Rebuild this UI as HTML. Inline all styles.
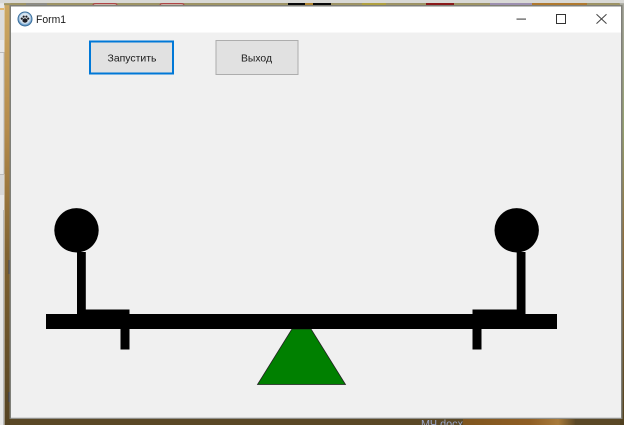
<!DOCTYPE html>
<html lang="ru">
<head>
<meta charset="utf-8">
<title>Form1</title>
<style>
html,body{margin:0;padding:0;background:#6b5430}
body{width:624px;height:425px;overflow:hidden;position:relative;font-family:"Liberation Sans","DejaVu Sans",sans-serif}
svg{position:absolute;left:0;top:0;display:block}
text{font-family:"Liberation Sans","DejaVu Sans",sans-serif;fill:#1a1a1a}
</style>
</head>
<body>
<svg width="624" height="425" viewBox="0 0 624 425" xmlns="http://www.w3.org/2000/svg">
<defs>
<linearGradient id="bgL" x1="0" y1="0" x2="0" y2="1">
<stop offset="0" stop-color="#cda862"/>
<stop offset=".3" stop-color="#b68c4c"/>
<stop offset=".6" stop-color="#806230"/>
<stop offset="1" stop-color="#554322"/>
</linearGradient>
<linearGradient id="bgR" x1="0" y1="0" x2="0" y2="1">
<stop offset="0" stop-color="#a9a9a0"/>
<stop offset=".3" stop-color="#95a070"/>
<stop offset=".55" stop-color="#8e7040"/>
<stop offset="1" stop-color="#50401f"/>
</linearGradient>
<linearGradient id="orange" x1="0" y1="0" x2="1" y2="0">
<stop offset="0" stop-color="#80561f"/>
<stop offset=".6" stop-color="#8f5e24"/>
<stop offset=".85" stop-color="#a87a3a"/>
<stop offset="1" stop-color="#5f4a26"/>
</linearGradient>
<radialGradient id="ico" cx=".5" cy=".45" r=".55">
<stop offset="0" stop-color="#ffffff"/>
<stop offset=".65" stop-color="#d0e0ef"/>
<stop offset="1" stop-color="#2f78b4"/>
</radialGradient>
</defs>

<!-- desktop background -->
<rect x="0" y="0" width="624" height="425" fill="#5f4b28"/>
<rect x="4.5" y="0" width="6" height="425" fill="url(#bgL)"/>
<rect x="0" y="0" width="4.5" height="425" fill="#e8e8e8"/>
<rect x="0" y="8" width="4" height="2" fill="#e2b870"/>
<rect x="0" y="10" width="4" height="30" fill="#dcdcdc"/>
<rect x="0" y="52" width="4" height="1" fill="#bcbcbc"/>
<rect x="3.5" y="52" width="1" height="122" fill="#bcbcbc"/>
<rect x="0" y="174" width="4" height="1" fill="#bcbcbc"/>
<rect x="0" y="175" width="4" height="20" fill="#d8d8d8"/>
<rect x="3" y="210" width="1" height="215" fill="#bcbcbc"/>
<rect x="619" y="0" width="5" height="425" fill="url(#bgR)"/>
<rect x="8.5" y="260" width="1.5" height="14" fill="#2f3f6a" opacity=".7"/>
<rect x="8.5" y="392" width="1.5" height="10" fill="#2f3f6a" opacity=".7"/>

<!-- top strip -->
<rect x="0" y="0" width="624" height="3.2" fill="#d9d9d6"/>
<rect x="4" y="3.2" width="616" height="2" fill="#a09665"/>
<rect x="26" y="3.2" width="21" height="2" fill="#8d8d88"/>
<path d="M93 5.2Q93 3.6 96 3.6H114Q117 3.6 117 5.2" fill="#c8c0b0" stroke="#b23a42" stroke-width="1"/>
<path d="M160 5.2Q160 3.6 163 3.6H181Q184 3.6 184 5.2" fill="#c8c0b0" stroke="#b23a42" stroke-width="1"/>
<rect x="288" y="3" width="43" height="2.2" fill="#0a0a0a"/>
<rect x="305" y="3" width="8" height="2.2" fill="#b08430"/>
<rect x="362" y="3" width="24" height="2.2" fill="#b0a040"/>
<rect x="426" y="3" width="28" height="2.2" fill="#8a1a1a"/>
<rect x="490" y="3" width="42" height="2.2" fill="#9d90b0"/>
<rect x="532" y="3" width="55" height="2.2" fill="#b07a30"/>

<!-- bottom desktop -->
<rect x="10" y="419" width="610" height="6" fill="#5a4826"/>
<rect x="463" y="419" width="112" height="6" fill="url(#orange)"/>
<text x="421" y="427.5" font-size="11" textLength="42" lengthAdjust="spacingAndGlyphs" style="fill:#9aa6c8">МЧ.docx</text>

<!-- window -->
<rect x="9.5" y="5" width="613" height="414" fill="#7f7f78"/>
<rect x="11" y="6.5" width="610" height="411" fill="#f0f0f0"/>
<rect x="11" y="6.5" width="610" height="26" fill="#ffffff"/>
<rect x="11" y="417" width="610" height="1.2" fill="#d8d8d8"/>

<!-- app icon -->
<circle cx="25" cy="19" r="7" fill="url(#ico)" stroke="#3c6f9c" stroke-width="1"/>
<ellipse cx="25" cy="20.5" rx="2.6" ry="2.2" fill="#1e1e24"/>
<circle cx="21.8" cy="18.6" r="1.1" fill="#1e1e24"/>
<circle cx="23.7" cy="16.6" r="1.1" fill="#1e1e24"/>
<circle cx="26.4" cy="16.6" r="1.1" fill="#1e1e24"/>
<circle cx="28.2" cy="18.6" r="1.1" fill="#1e1e24"/>

<text x="36" y="23" font-size="11" textLength="30" lengthAdjust="spacingAndGlyphs">Form1</text>

<!-- window controls -->
<rect x="516.5" y="18.5" width="9.5" height="1.2" fill="#555"/>
<rect x="556.5" y="14.5" width="9" height="9" fill="none" stroke="#333" stroke-width="1"/>
<path d="M596.5 14.2L606.5 23.6M606.5 14.2L596.5 23.6" fill="none" stroke="#444" stroke-width="1"/>

<!-- buttons -->
<rect x="90" y="41.5" width="83" height="32" fill="#e1e1e1" stroke="#0078d7" stroke-width="2"/>
<text x="107.5" y="61.5" font-size="10.5" textLength="49" lengthAdjust="spacingAndGlyphs">Запустить</text>
<rect x="216" y="40.5" width="82" height="34" fill="#e1e1e1" stroke="#adadad" stroke-width="1"/>
<text x="241" y="61.5" font-size="10.5" textLength="31" lengthAdjust="spacingAndGlyphs">Выход</text>

<!-- balance -->
<polygon points="257.5,384.5 292,329 311,329 345.5,384.5" fill="#008000" stroke="#222" stroke-width=".8"/>
<rect x="46" y="314" width="511" height="15" fill="#000"/>

<circle cx="76.5" cy="230.3" r="22.2" fill="#000"/>
<rect x="77" y="252" width="8.8" height="63" fill="#000"/>
<rect x="85" y="309.5" width="44.5" height="5" fill="#000"/>
<rect x="120.5" y="329" width="9" height="20.5" fill="#000"/>

<circle cx="516.7" cy="230.3" r="22.2" fill="#000"/>
<rect x="516.7" y="252" width="8.8" height="63" fill="#000"/>
<rect x="472.5" y="309.5" width="44.5" height="5" fill="#000"/>
<rect x="472.5" y="329" width="9" height="20.5" fill="#000"/>
</svg>
</body>
</html>
